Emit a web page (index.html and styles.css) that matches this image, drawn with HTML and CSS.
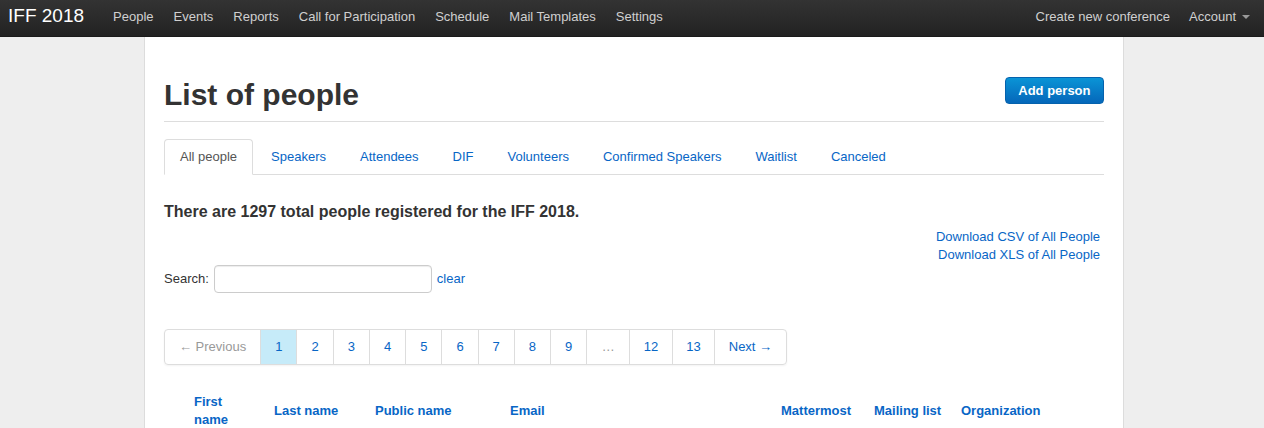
FILE: index.html
```html
<!DOCTYPE html>
<html lang="en">
<head>
<meta charset="utf-8">
<title>List of people</title>
<link rel="stylesheet" href="styles.css">
</head>
<body>
<header class="navbar">
  <a class="brand" href="#">IFF 2018</a>
  <nav class="nav-main">
    <a href="#">People</a>
    <a href="#">Events</a>
    <a href="#">Reports</a>
    <a href="#">Call for Participation</a>
    <a href="#">Schedule</a>
    <a href="#">Mail Templates</a>
    <a href="#">Settings</a>
  </nav>
  <nav class="nav-right">
    <a href="#">Create new conference</a>
    <a href="#">Account<span class="caret"></span></a>
  </nav>
</header>

<main class="container">
  <div class="page-header">
    <h1>List of people</h1>
    <a class="btn-primary" href="#">Add person</a>
  </div>

  <ul class="tabs">
    <li><a class="active" href="#">All people</a></li>
    <li><a href="#">Speakers</a></li>
    <li><a href="#">Attendees</a></li>
    <li><a href="#">DIF</a></li>
    <li><a href="#">Volunteers</a></li>
    <li><a href="#">Confirmed Speakers</a></li>
    <li><a href="#">Waitlist</a></li>
    <li><a href="#">Canceled</a></li>
  </ul>

  <p class="summary">There are 1297 total people registered for the IFF 2018.</p>

  <div class="downloads">
    <a href="#">Download CSV of All People</a>
    <a href="#">Download XLS of All People</a>
  </div>

  <div class="search">
    <label for="q">Search:</label>
    <input id="q" type="text">
    <a href="#">clear</a>
  </div>

  <ul class="pagination">
    <li><span class="disabled">&larr; Previous</span></li>
    <li><a class="current" href="#">1</a></li>
    <li><a href="#">2</a></li>
    <li><a href="#">3</a></li>
    <li><a href="#">4</a></li>
    <li><a href="#">5</a></li>
    <li><a href="#">6</a></li>
    <li><a href="#">7</a></li>
    <li><a href="#">8</a></li>
    <li><a href="#">9</a></li>
    <li><span class="gap">&hellip;</span></li>
    <li><a class="wide" href="#">12</a></li>
    <li><a class="wide" href="#">13</a></li>
    <li><a class="next" href="#">Next &rarr;</a></li>
  </ul>

  <table class="people">
    <colgroup>
      <col class="c-check">
      <col class="c-first">
      <col class="c-last">
      <col class="c-public">
      <col class="c-email">
      <col class="c-mm">
      <col class="c-ml">
      <col class="c-org">
    </colgroup>
    <thead>
      <tr>
        <th></th>
        <th><a href="#">First name</a></th>
        <th><a href="#">Last name</a></th>
        <th><a href="#">Public name</a></th>
        <th><a href="#">Email</a></th>
        <th><a href="#">Mattermost</a></th>
        <th><a href="#">Mailing list</a></th>
        <th><a href="#">Organization</a></th>
      </tr>
    </thead>
  </table>
</main>
</body>
</html>
```

FILE: styles.css
```css
* { box-sizing: border-box; }

html, body {
  margin: 0;
  padding: 0;
}

body {
  background: #eeeeee;
  font-family: "Liberation Sans", Arial, Helvetica, sans-serif;
  font-size: 13px;
  line-height: 18px;
  color: #333;
}

a {
  color: #0866c6;
  text-decoration: none;
}

/* navbar */
.navbar {
  height: 37px;
  display: flex;
  align-items: center;
  padding: 0 4px 0 8px;
  background: linear-gradient(#333333, #222222);
  border-bottom: 1px solid #1a1a1a;
}

.brand {
  color: #ffffff;
  font-size: 19px;
  line-height: 24px;
  margin-right: 19px;
  margin-top: -4px;
}

.nav-main, .nav-right {
  display: flex;
  align-items: center;
}

.nav-main a, .nav-right a {
  color: #d0d0d0;
  padding: 0 10px;
  line-height: 20px;
  margin-top: -3px;
}

.nav-right {
  margin-left: auto;
}

.nav-right a:first-child {
  padding-right: 9px;
}

.caret {
  display: inline-block;
  width: 0;
  height: 0;
  margin-left: 6px;
  vertical-align: middle;
  border-left: 4px solid transparent;
  border-right: 4px solid transparent;
  border-top: 4px solid #999;
}

/* container */
.container {
  width: 980px;
  margin: 0 0 0 calc((100% - 980px) / 2 + 2px);
  background: #ffffff;
  border-left: 1px solid #dcdcdc;
  border-right: 1px solid #dcdcdc;
  padding: 40px 19px 20px;
  min-height: 391px;
}

.page-header {
  display: flex;
  justify-content: space-between;
  align-items: flex-start;
  padding-bottom: 8px;
  border-bottom: 1px solid #dddddd;
}

.page-header h1 {
  margin: 0;
  font-size: 30px;
  line-height: 36px;
  font-weight: bold;
  color: #333;
}

.btn-primary {
  display: inline-block;
  color: #ffffff;
  font-weight: bold;
  font-size: 13px;
  line-height: 17px;
  padding: 4px 12.5px;
  border: 1px solid #0562ad;
  border-radius: 4px;
  background: linear-gradient(#0a94d6, #0567ba);
}

/* tabs */
.tabs {
  list-style: none;
  margin: 17px 0 0;
  padding: 0;
  display: flex;
  border-bottom: 1px solid #dddddd;
}

.tabs li {
  margin-bottom: -1px;
  margin-right: 2px;
}

.tabs a {
  display: block;
  padding: 8px 15px;
  line-height: 18px;
  border: 1px solid transparent;
  border-radius: 4px 4px 0 0;
}

.tabs a.active {
  color: #555555;
  background: #ffffff;
  border-color: #dddddd #dddddd transparent;
}

/* summary */
.summary {
  margin: 27px 0 0;
  font-size: 16px;
  line-height: 20px;
  font-weight: bold;
  color: #333;
}

.downloads {
  margin-top: 6px;
  display: flex;
  flex-direction: column;
  align-items: flex-end;
  padding-right: 4px;
}

.search {
  display: flex;
  align-items: center;
  gap: 5px;
  margin-top: 1px;
}

.search label {
  color: #333;
}

.search input {
  width: 218px;
  height: 28px;
  border: 1px solid #cccccc;
  border-radius: 4px;
  box-shadow: inset 0 1px 1px rgba(0, 0, 0, 0.075);
  font: inherit;
  padding: 4px 6px;
}

/* pagination */
.pagination {
  list-style: none;
  margin: 36px 0 0;
  padding: 0;
  display: inline-flex;
  border: 1px solid #dddddd;
  border-radius: 4px;
  box-shadow: 0 1px 2px rgba(0, 0, 0, 0.05);
  overflow: hidden;
}

.pagination li + li {
  border-left: 1px solid #dddddd;
}

.pagination a, .pagination span {
  display: block;
  padding: 0 14px;
  line-height: 34px;
}

.pagination .disabled {
  color: #999999;
}

.pagination .gap {
  color: #999999;
  padding: 0 14.5px;
}

.pagination .wide {
  padding: 0 13.5px;
}

.pagination .next {
  padding: 0 13.5px;
}

.pagination a.current {
  background: #c6ebf9;
}

/* table */
.people {
  margin-top: 19px;
  width: 100%;
  table-layout: fixed;
  border-collapse: collapse;
}

.people th {
  text-align: left;
  vertical-align: middle;
  padding: 9px 8px 8px;
  font-weight: bold;
  line-height: 18px;
}

.c-check { width: 22px; }
.c-first { width: 80px; }
.c-last { width: 101px; }
.c-public { width: 135px; }
.c-email { width: 271px; }
.c-mm { width: 93px; }
.c-ml { width: 87px; }
.c-org { width: 151px; }
```
